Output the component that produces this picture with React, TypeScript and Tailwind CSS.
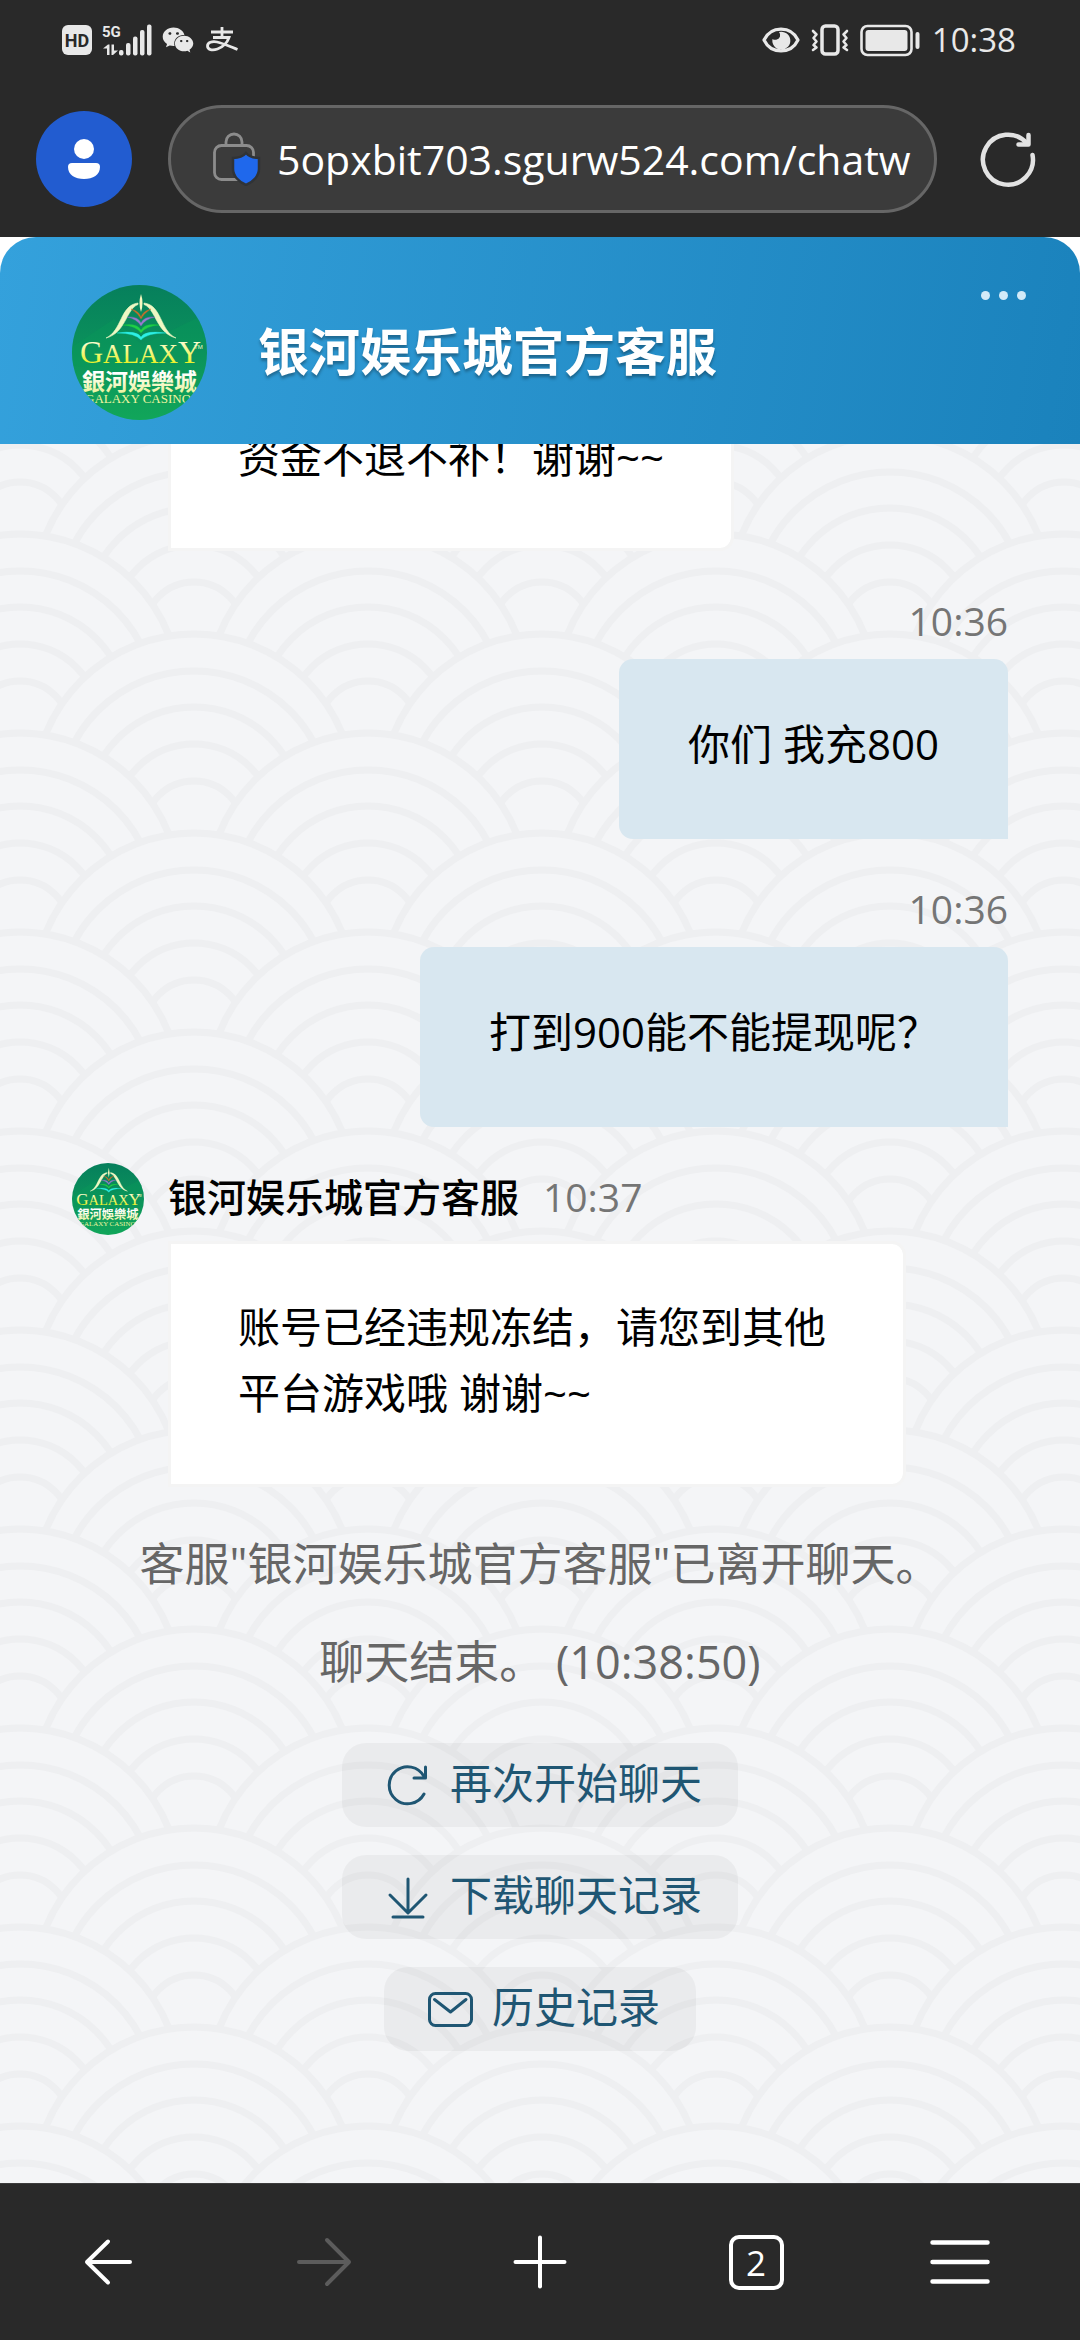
import React from "react";
import { FaWeixin } from "react-icons/fa";

const FONT = "font-['Open_Sans','Noto_Sans_CJK_SC',sans-serif]";

function GalaxyLogo({ id, className }: { id: string; className: string }) {
  return (
    <svg viewBox="0 0 135 135" className={className} role="img" aria-label="Galaxy Casino">
      <defs>
        <linearGradient id={`${id}-bg`} x1="0" y1="0" x2="0" y2="1">
          <stop offset="0" stopColor="#067f5c" />
          <stop offset="1" stopColor="#11a65a" />
        </linearGradient>
        <linearGradient id={`${id}-gold`} x1="0" y1="0" x2="0" y2="1">
          <stop offset="0.2" stopColor="#fdfdd8" />
          <stop offset="0.85" stopColor="#e9f01c" />
        </linearGradient>
        <linearGradient id={`${id}-pale`} x1="0" y1="0" x2="0" y2="1">
          <stop offset="0.3" stopColor="#ffffff" />
          <stop offset="1" stopColor="#e8f08a" />
        </linearGradient>
        <clipPath id={`${id}-clip`}>
          <circle cx="67.5" cy="67.5" r="67.5" />
        </clipPath>
      </defs>
      <g clipPath={`url(#${id}-clip)`}>
        <rect width="135" height="135" fill={`url(#${id}-bg)`} />
        <path d="M0 62 L42 34 L70 60 L135 28 V60 L60 90 L0 80 Z" fill="#0a9a58" opacity="0.35" />
        <path d="M69 9 Q72 18 69 27 Q66 18 69 9 Z" fill="#f6f8c0" />
        <path
          d="M34 53 C50 46 48 20 66 18 L66 19.500 C54 24 54 48 34 53 Z M104 53 C88 46 90 20 72 18 L72 19.500 C84 24 84 48 104 53 Z"
          fill="#eef8c4"
          stroke="#eef8c4"
          strokeWidth="0.600"
        />
        <g>
          <path d="M59 24 Q67 26 69 32 Q71 26 79 24 Q72 28 69 34 Q66 28 59 24 Z" fill="#d0702c" stroke="#c06a2c" strokeWidth="0.400" />
          <path d="M55 32 Q66 31 69 38 Q72 31 83 32 Q73 34 69 41 Q65 34 55 32 Z" fill="#9a7cd0" stroke="#8a6cc0" strokeWidth="0.400" />
          <path d="M51 40 Q65 38 69 45 Q73 38 87 40 Q74 41 69 48 Q64 41 51 40 Z" fill="#20d048" stroke="#16c23f" strokeWidth="0.400" />
          <path d="M45 48 Q65 45 69 52 Q73 45 94 48 Q75 48 69 55 Q63 48 45 48 Z" fill="#2ff0e4" stroke="#1fe0d8" strokeWidth="0.400" />
        </g>
        <text x="8" y="78" fontSize="32" fill={`url(#${id}-gold)`} fontFamily="'Liberation Serif', serif">
          G<tspan fontSize="27">ALAX</tspan>Y
        </text>
        <text x="122" y="64" fontSize="6" fill="#f3f8c8" fontFamily="'Liberation Sans', sans-serif">TM</text>
        <text
          x="10"
          y="105"
          fontSize="23"
          fontWeight="700"
          fill={`url(#${id}-pale)`}
          fontFamily="'Noto Sans CJK TC', sans-serif"
        >
          銀河娛樂城
        </text>
        <text x="13" y="118" fontSize="13" fill="#eef4a0" fontFamily="'Liberation Serif', serif">
          GALAXY CASINO
        </text>
      </g>
    </svg>
  );
}

function StatusBar() {
  return (
    <div className="flex h-20 items-center justify-between pr-16 pl-[62px] text-[#e8e8e8]">
      <div className="flex items-center">
        <svg viewBox="0 0 30 30" className="size-[30px]">
          <rect width="30" height="30" rx="6" fill="currentColor" />
          <text x="15" y="21.500" textAnchor="middle" fontSize="18" fontWeight="700" fill="#292929" fontFamily="Roboto, sans-serif">
            HD
          </text>
        </svg>
        <svg viewBox="0 0 52 32" className="ml-2.5 h-8 w-[52px]" fill="currentColor">
          <text x="0" y="13" fontSize="15" fontWeight="700" fontFamily="Roboto, sans-serif">5G</text>
          <path d="M1 24.500 L6 20.500 H7.500 V31 H5 V24.500 Z M9.500 20.500 H12 V26.500 H16 L11 31 H9.500 Z" />
          <rect x="17" y="26" width="4.500" height="5.500" rx="2" />
          <rect x="24" y="19" width="4.500" height="12.500" rx="2" />
          <rect x="31" y="12.500" width="4.500" height="19" rx="2" />
          <rect x="38" y="6" width="4.500" height="25.500" rx="2" />
          <rect x="45" y="0.500" width="4.500" height="31" rx="2" />
        </svg>
        <FaWeixin className="ml-2 size-8" />
        <svg viewBox="0 0 32 26" className="ml-3 h-[26px] w-8" fill="none" stroke="currentColor" strokeWidth="2.800">
          <path d="M5 5 H27 M16 0 V11 M7 10.500 H23 C21.500 15 17 20 11.500 22 C6 24 1.500 22.500 1.500 19 C1.500 15.500 6 14 11 15 C17 16.300 24 19.500 31.500 22.500" />
        </svg>
      </div>
      <div className="flex items-center">
        <svg viewBox="0 0 38 26" className="h-[26px] w-[38px]" fill="none" stroke="currentColor">
          <path d="M2 13 C9 -1.500 29 -1.500 36 13 C29 27.500 9 27.500 2 13 Z" strokeWidth="3.200" strokeLinejoin="round" />
          <path d="M17 5 A9 9 0 1 1 10.500 12 A5 5 0 0 0 18 9.500 A5 5 0 0 0 17 5 Z" fill="currentColor" stroke="none" />
        </svg>
        <svg viewBox="0 0 38 32" className="ml-[11px] h-8 w-[38px]" fill="none" stroke="currentColor" strokeLinecap="round" strokeLinejoin="round">
          <rect x="11" y="2" width="16" height="28" rx="3.500" strokeWidth="3.500" />
          <path d="M2 7 L5.500 10.500 L2.500 14 L5.500 17.500 L2.500 21 L5.500 23.500 L2 26" strokeWidth="2.600" />
          <path d="M36 7 L32.500 10.500 L35.500 14 L32.500 17.500 L35.500 21 L32.500 23.500 L36 26" strokeWidth="2.600" />
        </svg>
        <svg viewBox="0 0 60 33" className="ml-[11px] h-[33px] w-[60px]" fill="none" stroke="currentColor">
          <rect x="1.500" y="2" width="50" height="29" rx="6" strokeWidth="2.600" />
          <rect x="5.500" y="6" width="42" height="21" rx="3" fill="currentColor" stroke="none" />
          <rect x="55.500" y="8" width="4" height="17" rx="2" fill="currentColor" stroke="none" />
        </svg>
        <time className="ml-3 text-[33px] leading-10">10:38</time>
      </div>
    </div>
  );
}

function AddressBar() {
  return (
    <div className="flex items-center px-9 pt-[25px] pb-6">
      <button type="button" aria-label="账户" className="flex size-24 shrink-0 items-center justify-center rounded-full bg-[#225cd0]">
        <svg viewBox="0 0 34 42" className="h-[42px] w-[34px]" fill="#fff">
          <circle cx="17" cy="11" r="10" />
          <path d="M5 25 H29 Q33 25 33 29 C33 37 26 41 17 41 C8 41 1 37 1 29 Q1 25 5 25 Z" />
        </svg>
      </button>
      <label className="ml-9 flex h-[108px] min-w-0 flex-1 items-center rounded-full border-3 border-[#666] bg-[#3b3b3b] pr-[22px] pl-[42px]">
        <svg viewBox="0 0 48 54" className="h-[54px] w-12 shrink-0" fill="none" aria-hidden="true">
          <path d="M13 13 V10 A8 8 0 0 1 29 10 V13" stroke="#8c8c8c" strokeWidth="2.800" />
          <rect x="1.500" y="13.500" width="39" height="34" rx="7" stroke="#8c8c8c" strokeWidth="2.800" />
          <path
            d="M33 21 C36 24.500 41 26 46 26 V37 C46 44 40 50 33 53 C26 50 20 44 20 37 V26 C25 26 30 24.500 33 21 Z"
            fill="#1f68ec"
            stroke="#303336"
            strokeWidth="2.500"
          />
        </svg>
        <input
          type="text"
          aria-label="网址"
          readOnly
          value="5opxbit703.sgurw524.com/chatw"
          className={`ml-4 h-20 w-full min-w-0 flex-1 bg-transparent text-[41px] text-white outline-none ${FONT}`}
        />
      </label>
      <button type="button" aria-label="刷新" className="mr-2 ml-[43px] flex size-[56px] shrink-0 items-center justify-center">
        <svg viewBox="0 0 56 56" className="size-full" fill="none" stroke="#e2e2e2" strokeWidth="4.500" strokeLinecap="round" strokeLinejoin="round">
          <path d="M52.500 24 A25 25 0 1 1 47 12.500" />
          <path d="M48.500 4 V13.500 H38.500" />
        </svg>
      </button>
    </div>
  );
}

function ChatHeader() {
  return (
    <div className="relative z-10 bg-white">
      <header className="flex items-center rounded-t-[36px] bg-linear-100 from-[#34a1dc] to-[#1a82bc] pt-12 pr-12 pb-6 pl-[72px]">
        <GalaxyLogo id="logo-header" className="size-[135px] shrink-0" />
        <h1 className="ml-[51px] flex-1 pb-1 text-[51px] leading-[60px] font-bold text-white [text-shadow:0_3px_3px_rgba(0,0,0,0.3)]">
          银河娱乐城官方客服
        </h1>
        <button type="button" aria-label="菜单" className="flex gap-[9px] self-start py-1.5 pr-1.5">
          <span className="size-[9px] rounded-full bg-[#d2eaf8]" />
          <span className="size-[9px] rounded-full bg-[#d2eaf8]" />
          <span className="size-[9px] rounded-full bg-[#d2eaf8]" />
        </button>
      </header>
    </div>
  );
}

const RINGS = [
  { r: 160, top: 0 },
  { r: 136, top: 37 },
  { r: 108, top: 73 },
  { r: 80, top: 110 },
  { r: 50, top: 147 },
];

function Wave({ x, y }: { x: number; y: number }) {
  return (
    <g fill="#f4f5f7" stroke="#eeeff1" strokeWidth="7">
      {RINGS.map((ring) => (
        <circle key={ring.r} cx={x} cy={y + ring.top + ring.r} r={ring.r} />
      ))}
    </g>
  );
}

function WaveBackdrop() {
  return (
    <svg className="absolute inset-0 size-full" aria-hidden="true">
      <defs>
        <pattern id="waves" x="-154" y="90" width="348" height="199" patternUnits="userSpaceOnUse">
          <rect width="348" height="199" fill="#f4f5f7" />
          <Wave x={174} y={-199} />
          <Wave x={0} y={-99} />
          <Wave x={348} y={-99} />
          <Wave x={174} y={0} />
          <Wave x={0} y={100} />
          <Wave x={348} y={100} />
          <Wave x={174} y={199} />
        </pattern>
      </defs>
      <rect width="100%" height="100%" fill="url(#waves)" />
    </svg>
  );
}

function AgentBubble({ children }: { children: React.ReactNode }) {
  return (
    <p className="ml-24 w-fit max-w-[738px] rounded-r-[14px] border-3 border-[#f4f4f4] bg-white bg-clip-padding px-[67px] pt-[50px] pb-[58px] text-[42px] leading-[66px] text-black">
      {children}
    </p>
  );
}

function UserMessage({ time, text }: { time: string; text: string }) {
  return (
    <div className="flex flex-col items-end pt-10">
      <time className="mb-2 text-[39px] leading-[60px] text-[#757575]">{time}</time>
      <p className="rounded-[14px] rounded-br-none bg-[#d8e7f0] px-[69px] pt-[52px] pb-[62px] text-[42px] leading-[66px] text-black">
        {text}
      </p>
    </div>
  );
}

function ActionButton({ icon, label }: { icon: React.ReactNode; label: string }) {
  return (
    <button
      type="button"
      className="flex h-[84px] items-center gap-[19px] rounded-3xl bg-black/4 pr-9 pl-11 text-[42px] leading-[60px] text-[#1f5673]"
    >
      <svg
        viewBox="0 0 45 45"
        className="size-[45px]"
        fill="none"
        stroke="currentColor"
        strokeWidth="3"
        strokeLinecap="round"
        strokeLinejoin="round"
        aria-hidden="true"
      >
        {icon}
      </svg>
      <span className="pb-1">{label}</span>
    </button>
  );
}

function Chat() {
  return (
    <main className="relative flex min-h-0 flex-1 flex-col justify-end overflow-hidden bg-[#f4f5f7]">
      <WaveBackdrop />
      <div className="relative shrink-0 px-[72px] pb-[132px]">
        <AgentBubble>资金不退不补！谢谢~~</AgentBubble>
        <UserMessage time="10:36" text="你们 我充800" />
        <UserMessage time="10:36" text="打到900能不能提现呢？" />
        <div className="mt-9 mb-1.5 flex items-center">
          <GalaxyLogo id="logo-message" className="size-[72px]" />
          <span className="ml-6 pb-1 text-[39px] leading-[60px] font-medium text-black">银河娱乐城官方客服</span>
          <time className="ml-6 pb-1 text-[39px] leading-[60px] text-[#757575]">10:37</time>
        </div>
        <AgentBubble>账号已经违规冻结，请您到其他平台游戏哦 谢谢~~</AgentBubble>
        <div className="mt-11 mb-12 flex flex-col gap-8 text-center text-[45px] leading-[66px] text-[#666]">
          <p>客服"银河娱乐城官方客服"已离开聊天。</p>
          <p>聊天结束。 (10:38:50)</p>
        </div>
        <div className="flex flex-col items-center gap-7">
          <ActionButton
            label="再次开始聊天"
            icon={
              <>
                <path d="M38 31 A18.500 18.500 0 1 1 38 13.500" />
                <path d="M39.500 4 V15 H28" />
              </>
            }
          />
          <ActionButton
            label="下载聊天记录"
            icon={
              <>
                <path d="M22 4 V37 M4 20 L22 38 L40 20" />
                <path d="M7 42 H37" />
              </>
            }
          />
          <ActionButton
            label="历史记录"
            icon={
              <>
                <rect x="1.500" y="6.500" width="42" height="32" rx="6" />
                <path d="M6.500 12.500 L22.500 25 L38 12.500" />
              </>
            }
          />
        </div>
      </div>
    </main>
  );
}

function BottomBar() {
  const button = "flex items-center justify-center";
  return (
    <nav className="grid h-[157px] shrink-0 grid-cols-5 border-t border-[#3c3c3c] bg-[#292929]">
      <button type="button" aria-label="后退" className={button}>
        <svg viewBox="0 0 48 48" className="size-12" fill="none" stroke="#fff" strokeWidth="4" strokeLinecap="round" strokeLinejoin="round">
          <path d="M46 24 H3 M24 3.500 L3 24 L24 44.500" />
        </svg>
      </button>
      <button type="button" aria-label="前进" disabled className={button}>
        <svg viewBox="0 0 56 50" className="h-[50px] w-14" fill="none" stroke="#5c5c5c" strokeWidth="4" strokeLinecap="round" strokeLinejoin="round">
          <path d="M3 25 H53 M31 3 L53 25 L31 47" />
        </svg>
      </button>
      <button type="button" aria-label="新建标签页" className={button}>
        <svg viewBox="0 0 54 54" className="size-[54px]" fill="none" stroke="#fff" strokeWidth="4" strokeLinecap="round">
          <path d="M27 2.500 V51.500 M2.500 27 H51.500" />
        </svg>
      </button>
      <button type="button" aria-label="标签页" className={button}>
        <span className="flex size-[55px] items-center justify-center rounded-[10px] border-4 border-white text-[35px] leading-none text-white">
          2
        </span>
      </button>
      <button type="button" aria-label="菜单" className="flex items-center justify-center pr-6">
        <svg viewBox="0 0 60 46" className="h-[46px] w-[60px]" fill="none" stroke="#fff" strokeWidth="4.500" strokeLinecap="round">
          <path d="M2.500 3.500 H57.500 M2.500 23 H57.500 M2.500 42.500 H57.500" />
        </svg>
      </button>
    </nav>
  );
}

export default function App() {
  return (
    <div className={`flex h-screen flex-col overflow-hidden bg-[#292929] ${FONT}`}>
      <StatusBar />
      <AddressBar />
      <ChatHeader />
      <Chat />
      <BottomBar />
    </div>
  );
}
